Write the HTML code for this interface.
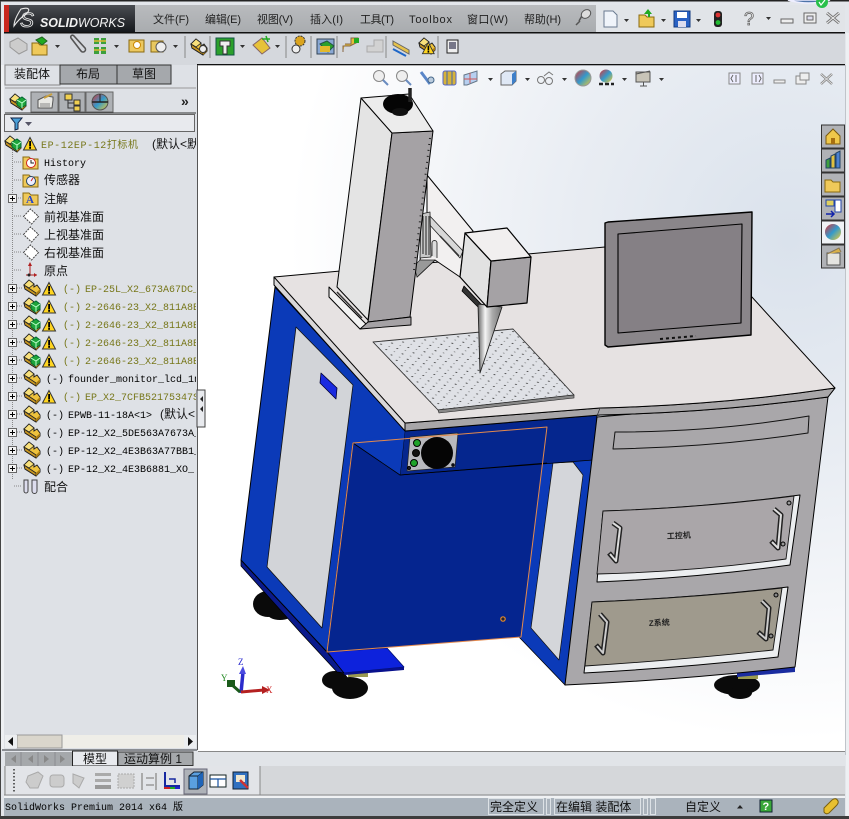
<!DOCTYPE html>
<html><head><meta charset="utf-8"><title>SolidWorks</title>
<style>
html,body{margin:0;padding:0;background:#dfe3e8;width:849px;height:819px;overflow:hidden}
svg{display:block}
text{font-family:"Liberation Sans","Noto Sans CJK SC",sans-serif;font-size:11px;fill:#222}
.m{font-family:"Liberation Mono","Noto Sans CJK SC",monospace;font-size:10px;fill:#000}
.y{fill:#77771a}
.c{font-family:"Liberation Sans","Noto Sans CJK SC",sans-serif;font-size:12px;fill:#111}
.a{fill:#333}
</style></head><body>
<svg width="849" height="819" viewBox="0 0 849 819" xmlns="http://www.w3.org/2000/svg">
<defs>
<radialGradient id="bg" gradientUnits="userSpaceOnUse" cx="790" cy="240" r="500">
<stop offset="0" stop-color="#dae2ec"/><stop offset=".45" stop-color="#e9edf3"/><stop offset="1" stop-color="#fff"/></radialGradient>
<linearGradient id="logo" x1="0" y1="0" x2="0" y2="1"><stop offset="0" stop-color="#4a4d52"/><stop offset="1" stop-color="#15181c"/></linearGradient>
<linearGradient id="menu" x1="0" y1="0" x2="0" y2="1"><stop offset="0" stop-color="#b9bbbe"/><stop offset="1" stop-color="#a9acaf"/></linearGradient>
<linearGradient id="cone" x1="0" y1="0" x2="1" y2="0"><stop offset="0" stop-color="#666"/><stop offset=".3" stop-color="#f4f4f4"/><stop offset=".6" stop-color="#aaa"/><stop offset="1" stop-color="#777"/></linearGradient>
<linearGradient id="ball" x1="0" y1="0" x2="1" y2="1"><stop offset="0" stop-color="#d33"/><stop offset=".5" stop-color="#39c"/><stop offset="1" stop-color="#ec3"/></linearGradient>
<pattern id="holes" patternUnits="userSpaceOnUse" width="1" height="1" patternTransform="matrix(11 -1.05 5.2 5.4 373 342)">
<rect width="1" height="1" fill="#dfe1e6"/><circle cx=".5" cy=".5" r=".085" fill="#333"/><circle cx="0" cy="0" r=".07" fill="#666"/><circle cx="1" cy="0" r=".07" fill="#666"/><circle cx="0" cy="1" r=".07" fill="#666"/><circle cx="1" cy="1" r=".07" fill="#666"/></pattern>
<clipPath id="tree"><rect x="0" y="134" width="196" height="600"/></clipPath>

<g id="p"><path d="M1 6 6 1 11 5 11 8 14 6 17 10 17 13 13 17 2 10Z" fill="#eec23c" stroke="#222" stroke-width="1"/><path d="M1 6 13 14 13 17 2 10Z" fill="#c89620" stroke="#222" stroke-width=".8"/><path d="M6 1 11 5 6 9 1 6Z" fill="#f8e07a" stroke="#222" stroke-width=".8"/><path d="M13 14 17 10 17 13 13 17Z" fill="#a87a10"/></g>
<g id="g"><use href="#p"/><path d="M8 7 13 4 17 7 17 12 12 15 8 12Z" fill="#1ea53a" stroke="#063" stroke-width="1"/><path d="M8 7 13 10 17 7M13 10V15" fill="none" stroke="#bfc" stroke-width="1"/></g>
<g id="w"><path d="M7 .5 13.5 13H.5Z" fill="#ffd520" stroke="#333" stroke-width="1"/><rect x="6.2" y="4" width="1.8" height="5.5" fill="#000"/><rect x="6.2" y="10" width="1.8" height="1.8" fill="#000"/></g>
<g id="b"><rect x=".5" y=".5" width="8" height="8" fill="#f4f4f4" stroke="#666"/><path d="M2 4.5H7M4.5 2V7" stroke="#000" fill="none"/></g>
<path id="ar" d="M0 0H5L2.5 3Z" fill="#333"/>
<g id="pl"><path d="M.5 8.5 7.5 1 15.5 8.5 8.5 16Z" fill="#fff" stroke="#444" stroke-dasharray="2 1"/></g>
<g id="fo"><path d="M0 3 6 3 8 5H15V15H0Z" fill="#efc95a" stroke="#8a6a10"/></g>
</defs>

<!-- frame -->
<rect width="849" height="819" fill="#e3e6eb"/>
<rect width="849" height="1.5" fill="#222"/>
<rect y="1" width="1" height="818" fill="#444"/>
<rect y="816" width="849" height="3" fill="#3c3c3c"/>

<!-- title -->
<rect x="4" y="5" width="5" height="27" fill="#c8271e"/>
<rect x="9" y="5" width="126" height="27" fill="url(#logo)"/>
<rect x="135" y="5" width="461" height="27" fill="url(#menu)"/>
<rect x="596" y="5" width="249" height="27" fill="#e1e4e8"/>
<path d="M21 9C28 7 31 9 27 13 23 16 18 20 14 26 14 21 17 15 21 9Z" fill="none" stroke="#e8e8e8" stroke-width="1.1"/>
<text x="20" y="27" style="font-family:'Liberation Sans',sans-serif;font-size:21px;font-style:italic;fill:none;stroke:#eee;stroke-width:.8">S</text>
<text x="40" y="27" style="font-family:'Liberation Sans',sans-serif;font-size:13px;font-weight:bold;font-style:italic;fill:#f2f2f2" textLength="38" lengthAdjust="spacingAndGlyphs">SOLID</text>
<text x="78" y="27" style="font-family:'Liberation Sans',sans-serif;font-size:13px;font-style:italic;fill:#f2f2f2" textLength="47" lengthAdjust="spacingAndGlyphs">WORKS</text>

<g style="font-size:11px">
<text x="153" y="23" textLength="36">文件(F)</text>
<text x="205" y="23" textLength="36">编辑(E)</text>
<text x="257" y="23" textLength="36">视图(V)</text>
<text x="310" y="23" textLength="33">插入(I)</text>
<text x="360" y="23" textLength="34">工具(T)</text>
<text x="409" y="23" textLength="43">Toolbox</text>
<text x="467" y="23" textLength="41">窗口(W)</text>
<text x="524" y="23" textLength="37">帮助(H)</text>
</g>
<!-- pin -->
<path d="M579 21 583 14M576 25 580 21" stroke="#555" stroke-width="1.5"/><ellipse cx="586" cy="14" rx="5" ry="4" fill="#ddd" stroke="#555" transform="rotate(-35 586 14)"/>
<!-- new doc etc -->
<path d="M604 11H613L617 15V27H604Z" fill="#f0f4fa" stroke="#6a7a90"/>
<use href="#ar" x="624" y="19"/>
<use href="#fo" x="639" y="12"/><path d="M648 9 652 14H650V17H648V14H644Z" fill="#2a2" />
<use href="#ar" x="661" y="19"/>
<rect x="674" y="11" width="16" height="16" fill="#2a62c4" stroke="#123a80"/><rect x="677" y="12" width="10" height="6" fill="#fff"/><rect x="678" y="21" width="8" height="6" fill="#dde"/>
<use href="#ar" x="696" y="19"/>
<rect x="714" y="11" width="8" height="16" rx="3" fill="#222"/><circle cx="718" cy="15" r="2.4" fill="#d33"/><circle cx="718" cy="22.5" r="2.4" fill="#2b3"/>
<text x="744" y="25" style="font-size:18px;font-family:'Liberation Sans',sans-serif;fill:#eee;stroke:#666;stroke-width:.8">?</text>
<use href="#ar" x="766" y="17"/>
<rect x="781" y="19" width="12" height="4" fill="#eee" stroke="#666"/>
<rect x="804" y="13" width="12" height="10" fill="#eee" stroke="#666"/><rect x="807" y="16" width="6" height="4" fill="#dde" stroke="#666"/>
<path d="M827 13 839 23M839 13 827 23" stroke="#777" stroke-width="3"/><path d="M827 13 839 23M839 13 827 23" stroke="#eee" stroke-width="1"/>
<!-- green check -->
<path d="M788 0Q808 6 830 0Z" fill="#4d73a8" stroke="#eef" stroke-width="1.5"/><circle cx="822" cy="2" r="6" fill="#28c04a"/><path d="M819 2 821 5 825 0" stroke="#fff" fill="none" stroke-width="1.2"/>

<!-- toolbar -->
<rect x="4" y="33" width="841" height="32" fill="#d5d8dd"/>
<rect x="4" y="32" width="841" height="1.5" fill="#111"/>
<!-- graphics area -->
<rect x="198" y="65" width="647" height="687" fill="url(#bg)"/>
<rect x="197" y="64" width="648" height="1.3" fill="#111"/>
<rect x="845" y="65" width="1" height="690" fill="#c0c4ca"/>
<rect x="846" y="33" width="3" height="783" fill="#eef0f3"/>

<!-- toolbar icons -->
<g stroke-width="1">
<path d="M10 42 18 38 27 44 27 50 19 54 10 47Z" fill="#ccc" stroke="#999"/>
<use href="#fo" x="32" y="40"/><path d="M36 40 42 37 47 41 42 45Z" fill="#2a2" stroke="#262"/>
<use href="#ar" x="55" y="45"/>
<path d="M71 38 81 51a2.5 2.5 0 0 0 4-3L74 36a1.6 1.6 0 0 0-3 2" fill="none" stroke="#555" stroke-width="1.6"/>
<g fill="#3da03d"><rect x="94" y="38" width="5" height="6"/><rect x="101" y="38" width="5" height="6"/><rect x="94" y="47" width="5" height="7"/><rect x="101" y="47" width="5" height="7"/></g><path d="M94 41H106M94 50H106" stroke="#db3" stroke-width="1.5"/>
<use href="#ar" x="114" y="45"/>
<rect x="129" y="40" width="15" height="12" fill="#ecc860" stroke="#8a6a10"/><circle cx="137" cy="45" r="3.5" fill="#fff" stroke="#c80"/>
<rect x="151" y="41" width="12" height="11" fill="#e8c860" stroke="#8a6a10"/><circle cx="161" cy="47" r="5" fill="#eee" stroke="#555"/>
<use href="#ar" x="173" y="45"/>
<path d="M185 36V58M210 36V58M286 36V58M311 36V58M337 36V58M386 36V58M438 36V58" stroke="#888"/>
<use href="#p" x="190" y="38"/><circle cx="203" cy="49" r="3.5" fill="#eee" stroke="#333"/>
<rect x="216" y="38" width="18" height="17" fill="#2ba02b" stroke="#154"/><path d="M220 41H230V46H227V54H223V46H220Z" fill="#eee" stroke="#333"/>
<use href="#ar" x="240" y="45"/>
<path d="M253 45 262 38 270 48 262 54Z" fill="#e7c23a" stroke="#866"/><path d="M266 36 268 42M262 39 270 39" stroke="#2a2" stroke-width="1.5"/>
<use href="#ar" x="275" y="45"/>
<circle cx="300" cy="41" r="5" fill="#dba41e" stroke="#333" stroke-dasharray="2 1"/><circle cx="296" cy="49" r="4" fill="#eee" stroke="#333"/>
<rect x="317" y="39" width="17" height="15" fill="#8aa8d4" stroke="#345"/><path d="M320 44 327 41 334 46 328 52Z" fill="#2ba02b" stroke="#254"/><rect x="320" y="46" width="10" height="6" fill="#e2b92c"/>
<path d="M343 52V46H350L358 42V38H351V44H345" fill="#e4be3a" stroke="#864"/><rect x="354" y="38" width="5" height="5" fill="#2a2"/>
<path d="M367 52V46H374V40H383V52Z" fill="#d2d2d2" stroke="#aaa"/>
<path d="M393 41 409 50V54L393 45Z" fill="#e6c24a" stroke="#666"/><path d="M393 49 406 56" stroke="#1d66c8" stroke-width="2"/>
<use href="#p" x="418" y="37"/><use href="#w" transform="translate(422 42) scale(.9)"/>
<rect x="447" y="40" width="11" height="13" fill="#eee" stroke="#222"/><rect x="449" y="42" width="7" height="7" fill="#778"/>
</g>

<!-- view toolbar icons -->
<g fill="none">
<circle cx="379" cy="76" r="5.5" fill="#eee" stroke="#888"/><path d="M383 80 388 85" stroke="#6a8cc0" stroke-width="2"/>
<circle cx="402" cy="76" r="5.5" fill="#eee" stroke="#888"/><path d="M406 80 411 85" stroke="#6a8cc0" stroke-width="2"/>
<path d="M421 72 430 84" stroke="#5a86c8" stroke-width="3"/><circle cx="431" cy="80" r="3" fill="#bcd" stroke="#468"/>
<rect x="443" y="71" width="13" height="14" rx="2" fill="#d6b23a" stroke="#56c"/><path d="M447 71V85M452 71V85" stroke="#46a"/>
<path d="M464 75 477 71V81L467 85H464Z" fill="#b7cff0" stroke="#678"/><path d="M470 73V83M464 79H477" stroke="#c55"/>
<use href="#ar" x="488" y="78"/>
<path d="M501 74 505 71H516V81L512 85H501Z" fill="#dfe8f5" stroke="#666"/><path d="M512 74V85L516 81V71Z" fill="#3e7fc8"/>
<use href="#ar" x="525" y="78"/>
<circle cx="541" cy="80" r="3.5" stroke="#777"/><circle cx="549" cy="81" r="3.5" stroke="#777"/><path d="M544 76 549 72 553 75" stroke="#777"/>
<use href="#ar" x="562" y="78"/>
<circle cx="583" cy="78" r="8" fill="url(#ball)" stroke="#999"/>
<circle cx="606" cy="76" r="6.5" fill="url(#ball)"/><path d="M599 84h4M605 84h4M611 84h3" stroke="#222" stroke-width="2.5"/>
<use href="#ar" x="622" y="78"/>
<rect x="636" y="72" width="14" height="10" fill="#c8c4b8" stroke="#555"/><path d="M640 86H647M643.5 82V86M636 74 650 71" stroke="#555"/>
<use href="#ar" x="659" y="78"/>
<rect x="729" y="73" width="11" height="11" fill="#eef" stroke="#888"/><path d="M733 75 731 78.5 733 82M736 75V82" stroke="#666"/>
<rect x="752" y="73" width="11" height="11" fill="#eef" stroke="#888"/><path d="M759 75 761 78.5 759 82M756 75V82" stroke="#666"/>
<rect x="774" y="80" width="11" height="3" fill="#eee" stroke="#888"/>
<rect x="796" y="76" width="10" height="8" fill="#eee" stroke="#888"/><rect x="800" y="73" width="9" height="7" fill="#eee" stroke="#888"/>
<path d="M821 74 832 84M832 74 821 84" stroke="#888" stroke-width="2.5"/><path d="M821 74 832 84M832 74 821 84" stroke="#eee" stroke-width=".8"/>
</g>

<!-- ===== MODEL ===== -->
<g stroke="#000" stroke-linejoin="round">
<!-- feet -->
<g fill="#0a0a0a" stroke="none">
<ellipse cx="268" cy="604" rx="15" ry="13"/><ellipse cx="280" cy="613" rx="13" ry="7"/>
<ellipse cx="335" cy="680" rx="13" ry="9"/><ellipse cx="350" cy="688" rx="18" ry="11"/>
<ellipse cx="737" cy="685" rx="23" ry="10"/><ellipse cx="740" cy="693" rx="12" ry="6"/>
</g>
<rect x="348" y="672" width="20" height="5" fill="#9a9a50" stroke="none"/>
<rect x="738" y="675" width="20" height="4" fill="#9a9a50" stroke="none"/>
<path d="M737 670 795 665 795 672 737 677Z" fill="#1a2ca0" stroke="none"/>
<!-- plate under -->
<path d="M328 652 387 648 404 667 343 673Z" fill="#0d22dc" stroke="#001070" stroke-width=".8"/>
<path d="M343 673 404 667 404 670 345 675Z" fill="#08108c" stroke="none"/>
<!-- bottom dark strip -->
<path d="M241 560 327 652 344 673 337 672 300 632 241 566Z" fill="#0a1a8c" stroke="#000" stroke-width=".8"/>
<!-- left blue side -->
<path d="M275 287 405 430 400 475 353 443 327 652 241 560Z" fill="#0b3ab8" stroke="#000" stroke-width="1"/>
<path d="M296 327 353 385 322 628 267 567Z" fill="#d2d4d8" stroke="#111" stroke-width=".8"/>
<path d="M321 373 337 388 336 399 320 383Z" fill="#1a2be0" stroke="#003" stroke-width=".8"/>
<!-- right blue -->
<path d="M540 460 593 458 565 685 519 637Z" fill="#0b3ab8" stroke="#000" stroke-width=".8"/>
<path d="M553 463 573 462 583 475 559 660 531 628Z" fill="#d4d6da" stroke="#111" stroke-width=".7"/>
<!-- recess panel -->
<path d="M353 443 547 427 521 637 327 652Z" fill="#05258f" stroke="none"/>
<path d="M405 430 597 415 593 460 400 475Z" fill="#05268e" stroke="#000" stroke-width=".8"/>
<path d="M400 475 353 443 405 430Z" fill="#0b3ab8" stroke="none"/>
<path d="M353 443 400 475 547 463" fill="none" stroke="#000" stroke-width=".8"/>
<!-- control panel -->
<path d="M410 437 458 433 455 467 407 471Z" fill="#b8b9be" stroke="#222" stroke-width=".7"/>
<circle cx="437" cy="453" r="16" fill="#050505" stroke="none"/>
<circle cx="417" cy="443" r="3.5" fill="#1fa32a" stroke="#000"/><circle cx="414" cy="463" r="3.5" fill="#1fa32a" stroke="#000"/><circle cx="416" cy="453" r="3.5" fill="#111"/>
<circle cx="409" cy="468" r="1.5" fill="#223"/><circle cx="453" cy="465" r="1.2" fill="#223"/>
<!-- orange outline -->
<path d="M353 443 547 427 521 637 327 652Z" fill="none" stroke="#e58a4c" stroke-width="1"/>
<circle cx="503" cy="619" r="2.2" fill="#223" stroke="#e58a2c" stroke-width="1.2"/>
<!-- right grey body -->
<path d="M597 417 828 397 795 667Q680 680 565 685Z" fill="#a9a7aa" stroke="#000" stroke-width="1"/>
<path d="M615 432Q715 432 809 416L808 433Q715 447 613 449Z" fill="#a9a7aa" stroke="#111"/>
<!-- drawer 1 -->
<path d="M603 511Q700 508 800 495L790 565Q695 578 597 582Z" fill="#eceef0" stroke="#000" stroke-width="1"/>
<path d="M603 511Q700 508 794 496L786 559Q690 572 597 574Z" fill="#aaa6a9" stroke="#111" stroke-width=".9"/>
<!-- drawer 2 -->
<path d="M592 602Q690 598 788 587L778 657Q680 668 584 673Z" fill="#eceef0" stroke="#000" stroke-width="1"/>
<path d="M592 602Q690 598 782 588L773 650Q680 660 585 666Z" fill="#9f9a8d" stroke="#111" stroke-width=".9"/>
<!-- handles -->
<g fill="none">
<path d="M613 523 620 528 616 561 609 553" stroke="#222" stroke-width="5"/><path d="M613 523 620 528 616 561 610 554" stroke="#ddd" stroke-width="2"/>
<path d="M774 509 781 515 778 548 771 541" stroke="#222" stroke-width="5"/><path d="M774 509 781 515 778 548 772 542" stroke="#ddd" stroke-width="2"/>
<path d="M600 614 607 622 603 653 596 645" stroke="#222" stroke-width="5"/><path d="M600 614 607 622 603 653 597 646" stroke="#ccc" stroke-width="2"/>
<path d="M762 601 769 608 766 639 758 632" stroke="#222" stroke-width="5"/><path d="M762 601 769 608 766 639 759 633" stroke="#ccc" stroke-width="2"/>
</g>
<circle cx="789" cy="503" r="2" fill="#999"/><circle cx="783" cy="544" r="2" fill="#999"/><circle cx="776" cy="595" r="2" fill="#888"/><circle cx="771" cy="636" r="2" fill="#888"/>
<!-- strip & top -->
<path d="M274 277 274 285 405 431 600 415Q720 412 828 397L835 388 605 300Z" fill="#d9d7d8" stroke="#000" stroke-width="1"/>
<path d="M405 423 405 431 600 415Q720 412 828 397L835 388Q720 405 600 408Z" fill="#a8a6a8" stroke="#000" stroke-width="1"/>
<path d="M274 277 605 247 698 238 835 388Q720 405 600 408L405 423Z" fill="#e6e2e2" stroke="#000" stroke-width="1"/>
<path d="M600 408 597 416" stroke="#333" stroke-width=".8"/>
<!-- plate -->
<path d="M373 342 513 329 574 395 438 410Z" fill="url(#holes)" stroke="#333" stroke-width=".9"/>
<path d="M438 410 574 395 574 398 439 413Z" fill="#888" stroke="#222" stroke-width=".6"/>
<!-- arm -->
<path d="M427 175 473 231 463 251 460 277 435 260 417 277 427 220Z" fill="#f2f0f0" stroke="#000" stroke-width="1"/>
<path d="M427 213 463 251 460 258 427 222Z" fill="#d8d8d8" stroke="#222" stroke-width=".8"/>
<path d="M440 236 459 256" stroke="#333" stroke-width="1.5"/>
<path d="M421 214 430 212 431 257 420 258Z" fill="#c8c8c8" stroke="#222" stroke-width=".8"/>
<path d="M423 216V254M426 216V255M429 216V255" stroke="#222" stroke-width="1" fill="none"/>
<path d="M432 256V243a2.5 2.5 0 0 1 5 0V258" stroke="#333" fill="#ddd" stroke-width=".9"/>
<path d="M417 277 435 260H420L414 266Z" fill="#999" stroke="#222" stroke-width=".7"/>
<!-- column -->
<path d="M329 287 368 326 360 329 329 297Z" fill="#f2f2f2" stroke="#000" stroke-width="1"/>
<path d="M337 292 362 318" stroke="#333" stroke-width="1.5"/>
<path d="M361 98 392 133 368 320 337 287Z" fill="#e4e4e4" stroke="#000" stroke-width="1"/>
<path d="M392 133 433 131 410 317 368 322Z" fill="#a5a2a5" stroke="#000" stroke-width="1"/>
<path d="M360 329 411 325 411 317 368 322Z" fill="#a5a2a5" stroke="#000" stroke-width=".9"/>
<path d="M361 98 409 94 433 131 392 133Z" fill="#ececec" stroke="#000" stroke-width="1"/>
<path d="M430 138 414 270" stroke="#222" stroke-width="2" stroke-dasharray="1 5" fill="none"/>
<!-- knob -->
<ellipse cx="398" cy="104" rx="15" ry="10" fill="#050505" stroke="none"/>
<ellipse cx="400" cy="112" rx="8" ry="4" fill="#111" stroke="none"/>
<path d="M410 88V102" stroke="#222" stroke-width="3.5"/>
<!-- head -->
<path d="M464 286 481 304 488 306 480 309 462 291Z" fill="#333" stroke="#000" stroke-width=".8"/>
<path d="M478 304 502 307 480 373Z" fill="url(#cone)" stroke="#222" stroke-width=".9"/>
<path d="M465 233 491 261 487 307 460 277Z" fill="#e2e2e2" stroke="#000" stroke-width="1.2"/>
<path d="M491 261 531 257 527 303 487 307Z" fill="#a5a2a5" stroke="#000" stroke-width="1.2"/>
<path d="M465 233 507 228 531 257 491 261Z" fill="#f1efef" stroke="#000" stroke-width="1.2"/>
<!-- monitor -->
<path d="M605 223 608 222 752 212 751 335 608 347 605 345Z" fill="#8a868a" stroke="#000" stroke-width="1.4"/>
<path d="M618 234 742 224 741 323 618 333Z" fill="#858085" stroke="#000" stroke-width="1.1"/>
<path d="M660 339 696 336" stroke="#111" stroke-width="2" stroke-dasharray="3 3"/>
</g>
<text x="667" y="539" style="font-size:8px;fill:#222;font-weight:bold" transform="rotate(-3 667 539)">工控机</text>
<text x="649" y="626" style="font-size:8px;fill:#222;font-weight:bold" transform="rotate(-3 649 626)">Z系统</text>

<!-- triad -->
<g>
<path d="M241 693 243 672" stroke="#2b2bcc" stroke-width="3.5"/><path d="M243 666 246 674H239Z" fill="#4a4ae0"/>
<path d="M241 692 264 690" stroke="#b42020" stroke-width="3"/><path d="M270 690 262 694V686Z" fill="#b42020"/>
<path d="M240 692 231 684" stroke="#1a5a1a" stroke-width="3"/><rect x="227" y="680" width="8" height="7" fill="#1a5a1a"/>
<text x="238" y="665" style="font-size:9px;fill:#22c;font-family:'Liberation Serif',serif">Z</text>
<text x="266" y="693" style="font-size:9px;fill:#c22;font-family:'Liberation Serif',serif">X</text>
<text x="221" y="681" style="font-size:9px;fill:#282;font-family:'Liberation Serif',serif">Y</text>
</g>

<!-- task pane tabs -->
<g stroke="#333" stroke-width="1">
<rect x="821.5" y="125" width="23" height="23" fill="#b0b2b6"/>
<rect x="821.5" y="149" width="23" height="23" fill="#b0b2b6"/>
<rect x="821.5" y="173" width="23" height="23" fill="#b0b2b6"/>
<rect x="821.5" y="197" width="23" height="23" fill="#b0b2b6"/>
<rect x="821.5" y="221" width="23" height="23" fill="#f0f2f5"/>
<rect x="821.5" y="245" width="23" height="23" fill="#b0b2b6"/>
</g>
<path d="M826 136 833 129 840 136V144H826Z" fill="#f0c84a" stroke="#7a5a10"/><rect x="831" y="138" width="4" height="6" fill="#a87010"/>
<path d="M826 168V160L830 158V168Z" fill="#3f9f3f" stroke="#246"/><path d="M831 168V156L835 154V168Z" fill="#e0c040" stroke="#246"/><path d="M836 168V153L840 151V168Z" fill="#4a80d0" stroke="#246"/>
<use href="#fo" x="825" y="177"/>
<rect x="826" y="200" width="8" height="6" fill="#dfd060" stroke="#24a"/><rect x="835" y="200" width="6" height="12" fill="#fff" stroke="#24a"/><path d="M826 214H834M831 211 834 214 831 217" stroke="#12a" fill="none" stroke-width="1.5"/>
<circle cx="833" cy="232" r="8" fill="url(#ball)"/>
<rect x="827" y="253" width="13" height="12" fill="#e4e4e0" stroke="#555"/><path d="M827 254 839 248 841 252" fill="#d8b04a" stroke="#875"/>

<!-- ===== LEFT PANEL ===== -->
<rect x="2" y="65" width="195" height="684" fill="#dee1e6"/>
<rect x="197" y="65" width="1" height="685" fill="#555"/>
<rect x="1" y="65" width="3" height="685" fill="#eef0f3"/>
<!-- tabs -->
<path d="M5 65H60V85H5Z" fill="#dee1e6" stroke="#888"/>
<rect x="60" y="65" width="57" height="19" fill="#a5a8ac" stroke="#333"/>
<rect x="117" y="65" width="54" height="19" fill="#a5a8ac" stroke="#333"/>
<text x="14" y="78" class="c">装配体</text>
<text x="76" y="78" class="c">布局</text>
<text x="132" y="78" class="c">草图</text>
<path d="M5 88H196" stroke="#999" fill="none"/>
<rect x="31" y="92" width="27" height="20" fill="#aeb1b5" stroke="#666"/>
<rect x="59" y="92" width="26" height="20" fill="#aeb1b5" stroke="#666"/>
<rect x="86" y="92" width="27" height="20" fill="#aeb1b5" stroke="#666"/>
<use href="#g" x="9" y="93"/>
<path d="M38 100 46 96 53 97V100L52 108H38Z" fill="#e8e8e4" stroke="#555"/><path d="M40 104H50M40 106H50" stroke="#888"/><path d="M44 98 52 94" stroke="#c8a040" stroke-width="2"/>
<rect x="65" y="94" width="7" height="6" fill="#f0d050" stroke="#333"/><rect x="74" y="100" width="6" height="5" fill="#f0d050" stroke="#333"/><rect x="74" y="106" width="6" height="5" fill="#f0d050" stroke="#333"/><path d="M68 100V108H74M68 103H74" stroke="#333" fill="none"/>
<circle cx="100" cy="102" r="8" fill="url(#ball)" stroke="#555"/><path d="M92 102H108" stroke="#222" stroke-width="1.5"/><path d="M100 94V102" stroke="#222"/>
<text x="181" y="106" style="font-size:14px;font-weight:bold;fill:#222">»</text>
<path d="M5 113H196" stroke="#333" fill="none"/>
<rect x="4.5" y="114.5" width="190" height="17" fill="#e8eaee" stroke="#666"/>
<path d="M11 118H22L18 123V129L15 130V123Z" fill="#4aa0d8" stroke="#124"/>
<path d="M25 122H32L28.5 126Z" fill="#556"/>

<!-- tree -->
<g clip-path="url(#tree)">
<path d="M12.5 150V480M14 162H22M14 180H22M16 198H22M14 216H22M14 234H22M14 252H22M14 270H22M17 288H22M17 306H22M17 324H22M17 342H22M17 360H22M17 378H22M17 396H22M17 414H22M17 432H22M17 450H22M17 468H22M14 486H22" stroke="#888" stroke-dasharray="1 1" fill="none"/>
<use href="#g" x="4" y="135"/><use href="#w" x="23" y="137"/>
<text x="41" y="148" class="m y" textLength="97">EP-12EP-12打标机</text>
<text x="152" y="148" class="c y" style="font-size:12px">(默认&lt;默</text>

<use href="#fo" x="23" y="154"/><circle cx="31" cy="163" r="4.5" fill="#fff" stroke="#c22"/><path d="M31 160V163H34" stroke="#222" fill="none"/>
<text x="44" y="166" class="m">History</text>
<use href="#fo" x="23" y="172"/><circle cx="31" cy="181" r="4.5" fill="#eef" stroke="#246"/><path d="M31 181 33 178" stroke="#c22"/>
<text x="44" y="184" class="c">传感器</text>
<use href="#b" x="8" y="194"/>
<use href="#fo" x="23" y="190"/><text x="26" y="203" style="font-size:11px;font-weight:bold;fill:#24c;font-family:'Liberation Serif',serif">A</text>
<text x="44" y="203" class="c">注解</text>
<use href="#pl" x="23" y="208"/><text x="44" y="221" class="c">前视基准面</text>
<use href="#pl" x="23" y="226"/><text x="44" y="239" class="c">上视基准面</text>
<use href="#pl" x="23" y="244"/><text x="44" y="257" class="c">右视基准面</text>
<path d="M30 263V275M30 275H37M30 275 26 275" stroke="#b02020" fill="none"/><path d="M30 262 28 266H32ZM37 275 34 273V277Z" fill="#b02020"/><circle cx="29" cy="275" r="1.5" fill="#222"/>
<text x="44" y="275" class="c">原点</text>

<use href="#b" x="8" y="284"/><use href="#p" x="23" y="279"/><use href="#w" x="42" y="282"/>
<text x="63" y="292" class="m y">(-)</text><text x="85" y="292" class="m y">EP-25L_X2_673A67DC_</text>
<use href="#b" x="8" y="302"/><use href="#g" x="23" y="297"/><use href="#w" x="42" y="300"/>
<text x="63" y="310" class="m y">(-)</text><text x="85" y="310" class="m y">2-2646-23_X2_811A8E</text>
<use href="#b" x="8" y="320"/><use href="#g" x="23" y="315"/><use href="#w" x="42" y="318"/>
<text x="63" y="328" class="m y">(-)</text><text x="85" y="328" class="m y">2-2646-23_X2_811A8E</text>
<use href="#b" x="8" y="338"/><use href="#g" x="23" y="333"/><use href="#w" x="42" y="336"/>
<text x="63" y="346" class="m y">(-)</text><text x="85" y="346" class="m y">2-2646-23_X2_811A8E</text>
<use href="#b" x="8" y="356"/><use href="#g" x="23" y="351"/><use href="#w" x="42" y="354"/>
<text x="63" y="364" class="m y">(-)</text><text x="85" y="364" class="m y">2-2646-23_X2_811A8E</text>
<use href="#b" x="8" y="374"/><use href="#p" x="23" y="369"/>
<text x="46" y="382" class="m">(-)</text><text x="68" y="382" class="m">founder_monitor_lcd_1n</text>
<use href="#b" x="8" y="392"/><use href="#p" x="23" y="387"/><use href="#w" x="42" y="390"/>
<text x="63" y="400" class="m y">(-)</text><text x="85" y="400" class="m y">EP_X2_7CFB52175347S</text>
<use href="#b" x="8" y="410"/><use href="#p" x="23" y="405"/>
<text x="46" y="418" class="m">(-)</text><text x="68" y="418" class="m" textLength="84">EPWB-11-18A&lt;1&gt;</text><text x="160" y="418" class="c">(默认&lt;</text>
<use href="#b" x="8" y="428"/><use href="#p" x="23" y="423"/>
<text x="46" y="436" class="m">(-)</text><text x="68" y="436" class="m">EP-12_X2_5DE563A7673A_</text>
<use href="#b" x="8" y="446"/><use href="#p" x="23" y="441"/>
<text x="46" y="454" class="m">(-)</text><text x="68" y="454" class="m">EP-12_X2_4E3B63A77BB1_</text>
<use href="#b" x="8" y="464"/><use href="#p" x="23" y="459"/>
<text x="46" y="472" class="m">(-)</text><text x="68" y="472" class="m">EP-12_X2_4E3B6881_XO_</text>
<path d="M24 480H28V491a2 2 0 0 1-4 0ZM32 480H37V491a2.5 2.5 0 0 1-5 0Z" fill="#dde" stroke="#444"/>
<text x="44" y="491" class="c">配合</text>
</g>
<rect x="197" y="390" width="8" height="37" fill="#e8eaee" stroke="#444"/>
<path d="M203 396 200 399 203 402ZM203 406 200 409 203 412Z" fill="#222"/>

<!-- scrollbar -->
<rect x="5" y="735" width="191" height="13" fill="#efeee8"/>
<rect x="17" y="735" width="45" height="13" fill="#dad6cc" stroke="#999"/>
<rect x="5" y="735" width="12" height="13" fill="#eceef0"/><path d="M13 737V746L8 741.5Z" fill="#111"/>
<rect x="184" y="735" width="12" height="13" fill="#eceef0"/><path d="M188 737V746L193 741.5Z" fill="#111"/>
<rect x="2" y="749" width="195" height="2" fill="#8a8d92"/>

<!-- bottom tabs -->
<rect x="198" y="751.5" width="647" height="1.4" fill="#111"/>
<rect x="4" y="752" width="841" height="14" fill="#e1e4e8"/>
<rect x="5" y="752" width="67" height="14" fill="#a5a8ab"/>
<path d="M21 752V766M38 752V766M55 752V766" stroke="#8a8d90"/>
<path d="M16 755 11 759 16 763ZM33 755 28 759 33 763ZM44 755 49 759 44 763ZM60 755 65 759 60 763Z" fill="#888"/>
<rect x="72.5" y="751" width="45" height="15" fill="#e8eaee" stroke="#222"/>
<rect x="118" y="752" width="75" height="13.5" fill="#a5a8ab" stroke="#333"/>
<text x="83" y="763" class="c">模型</text>
<text x="124" y="763" class="c" textLength="58">运动算例 1</text>

<!-- bottom toolbar -->
<rect x="4" y="766" width="841" height="29" fill="#d5d7da"/>
<rect x="5" y="766" width="255" height="29" fill="#e2e4e8"/>
<path d="M260 766V795" stroke="#888"/>
<path d="M5 766V795" stroke="#888"/>
<path d="M14 769V792" stroke="#333" stroke-dasharray="1.5 2" stroke-width="1.5"/>
<g fill="#ccc" stroke="#aaa">
<path d="M28 776 38 772 43 776 38 788 30 788 26 782Z"/>
<rect x="50" y="775" width="14" height="12" rx="3"/>
<path d="M73 774 84 778 79 788 73 783Z"/>
</g>
<rect x="95" y="773" width="16" height="3" fill="#aaa"/><rect x="95" y="779" width="16" height="3" fill="#aaa"/><rect x="95" y="785" width="16" height="4" fill="#999"/>
<rect x="118" y="774" width="16" height="14" fill="#d0d0d0" stroke="#aaa" stroke-dasharray="2 1"/>
<path d="M142 773V790M156 773V790" stroke="#aaa" stroke-width="2"/><path d="M146 778H154M146 785H154" stroke="#999" stroke-width="1.5"/>
<path d="M165 772V786H180" stroke="#1628a0" fill="none" stroke-width="2"/><path d="M169 779H175V783" stroke="#1628a0" fill="none" stroke-width="1.5"/><path d="M164 788H170" stroke="#c22" stroke-width="2"/><path d="M170 788H175" stroke="#2a2" stroke-width="2"/><path d="M175 788H180" stroke="#22c" stroke-width="2"/>
<rect x="184" y="769" width="23" height="25" fill="#aeb2b8" stroke="#667"/>
<path d="M189 776 194 772H203V785L198 789H189Z" fill="#5aa0e0" stroke="#123"/><path d="M189 776H198V789M198 776 203 772" stroke="#123" fill="none"/><path d="M198 776V789L203 785V772Z" fill="#1f64b8"/>
<rect x="210" y="775" width="16" height="12" fill="#fff" stroke="#122"/><path d="M210 779H226M218 779V787" stroke="#1650a0" stroke-width="1.2"/>
<rect x="233" y="772" width="15" height="17" fill="#3070c0" stroke="#123"/><rect x="236" y="775" width="9" height="7" fill="#f0e8d0"/><path d="M240 780 248 788" stroke="#c33" stroke-width="2.5"/>

<!-- status -->
<rect x="4" y="794.5" width="841" height="1" fill="#888"/>
<rect x="4" y="796" width="841" height="2" fill="#f0f2f4"/>
<rect x="4" y="798" width="841" height="18" fill="#aab3bc"/>
<text x="5" y="810" class="m">SolidWorks Premium 2014 x64 版</text>
<g fill="none" stroke="#dde2e6">
<rect x="488.5" y="798.5" width="55" height="16"/>
<rect x="546.5" y="798.5" width="4" height="16"/>
<rect x="554.5" y="798.5" width="86" height="16"/>
<rect x="643.5" y="798.5" width="4" height="16"/>
<rect x="650.5" y="798.5" width="5" height="16"/>
</g>
<text x="490" y="811" class="c">完全定义</text>
<text x="556" y="811" class="c">在编辑 装配体</text>
<text x="685" y="811" class="c">自定义</text>
<path d="M737 808.5H743L740 805Z" fill="#222"/>
<rect x="760" y="800" width="12" height="12" fill="#3aa83a" stroke="#123"/>
<text x="762.5" y="810" style="font-size:11px;font-weight:bold;fill:#fff">?</text>
<path d="M824 808 832 800Q836 797 838 801Q839 803 836 806L829 813Q826 815 824 812Z" fill="#e8c030" stroke="#7a6010"/>
</svg>
</body></html>
